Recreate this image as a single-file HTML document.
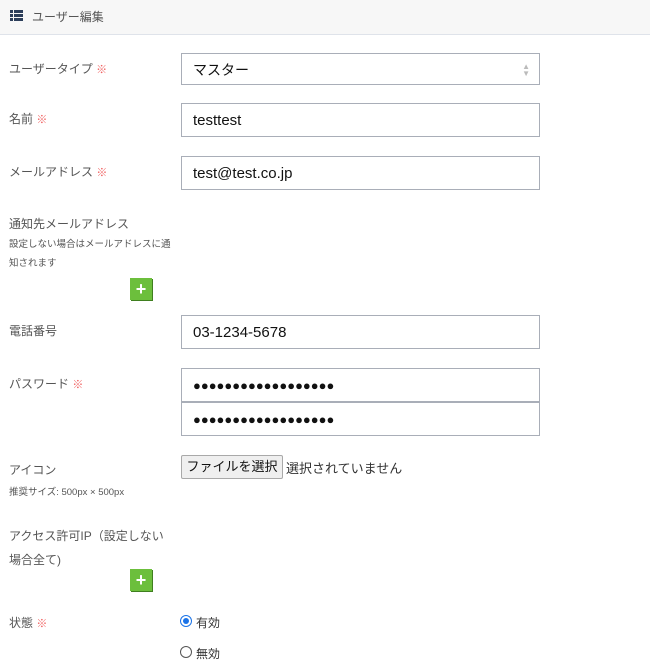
<!DOCTYPE html><html><head><meta charset="utf-8"><style>
body{margin:0;width:650px;height:671px;background:#fff;position:relative;overflow:hidden;font-family:"Liberation Sans","Noto Sans CJK JP",sans-serif;color:#333}
.a{position:absolute}
.hd{left:0;top:0;width:650px;height:34px;background:#f7f7f7;border-bottom:1px solid #dfe3ea}
.lb{font-size:12px;color:#555;left:9px}
.r{color:#f06060;font-size:11px}
.in{left:181px;width:359px;height:32px;border:1px solid #a9aeb8;font-size:15px;line-height:32px;padding-left:11px;box-sizing:border-box;color:#111;background:#fff}
.pl{width:22px;height:22px;background:#6cbf3c;box-shadow:1px 1px 0 #3f7f1f;color:#fff;font-weight:bold;font-size:18px;line-height:22px;text-align:center}
.sm{font-size:9.5px;color:#555;left:9px}
</style></head><body>
<div class="a hd"></div>
<svg class="a" style="left:10px;top:10px" width="13" height="11"><rect x="0" y="0" width="3" height="3" fill="#2c3e5a"/><rect x="4" y="0" width="9" height="3" fill="#2c3e5a"/><rect x="0" y="4" width="3" height="3" fill="#2c3e5a"/><rect x="4" y="4" width="9" height="3" fill="#2c3e5a"/><rect x="0" y="8" width="3" height="3" fill="#2c3e5a"/><rect x="4" y="8" width="9" height="3" fill="#2c3e5a"/></svg>
<div class="a" style="left:32px;top:8px;font-size:12px;color:#555">ユーザー編集</div>

<div class="a lb" style="top:60px">ユーザータイプ <span class="r">※</span></div>
<div class="a in" style="top:53px;height:32px;font-size:14px">マスター<span class="a" style="right:9px;font-size:8px;color:#bbb;line-height:7px;top:9px">▲<br>▼</span></div>
<div class="a lb" style="top:110px">名前 <span class="r">※</span></div>
<div class="a in" style="top:103px;height:34px;line-height:34px">testtest</div>
<div class="a lb" style="top:163px">メールアドレス <span class="r">※</span></div>
<div class="a in" style="top:156px;height:34px;line-height:34px">test@test.co.jp</div>
<div class="a lb" style="top:215px">通知先メールアドレス</div>
<div class="a sm" style="top:235px;line-height:19px">設定しない場合はメールアドレスに通<br>知されます</div>
<div class="a pl" style="left:130px;top:278px">+</div>
<div class="a lb" style="top:322px">電話番号</div>
<div class="a in" style="top:315px;height:34px;line-height:34px">03-1234-5678</div>
<div class="a lb" style="top:375px">パスワード <span class="r">※</span></div>
<div class="a in" style="top:368px;height:34px;line-height:34px;font-size:13px">●●●●●●●●●●●●●●●●●●</div>
<div class="a in" style="top:402px;height:34px;line-height:34px;font-size:13px">●●●●●●●●●●●●●●●●●●</div>
<div class="a lb" style="top:461px">アイコン</div>
<div class="a sm" style="top:484px">推奨サイズ: 500px × 500px</div>
<div class="a" style="left:181px;top:455px;width:102px;height:24px;border:1px solid #a9a9a9;background:#efefef;box-sizing:border-box;font-size:13px;line-height:22px;text-align:center;border-radius:2px;color:#111">ファイルを選択</div>
<div class="a" style="left:286px;top:458px;font-size:13px;color:#333">選択されていません</div>
<div class="a lb" style="top:524px;line-height:24px">アクセス許可IP（設定しない<br>場合全て)</div>
<div class="a pl" style="left:130px;top:569px">+</div>
<div class="a lb" style="top:614px">状態 <span class="r">※</span></div>
<div class="a" style="left:180px;top:615px;width:10px;height:10px;border:1px solid #1a73e8;border-radius:50%;"><div style="margin:2px;width:6px;height:6px;border-radius:50%;background:#1a73e8"></div></div>
<div class="a" style="left:196px;top:614px;font-size:12px">有効</div>
<div class="a" style="left:180px;top:646px;width:10px;height:10px;border:1px solid #555;border-radius:50%"></div>
<div class="a" style="left:196px;top:645px;font-size:12px">無効</div>
</body></html>
